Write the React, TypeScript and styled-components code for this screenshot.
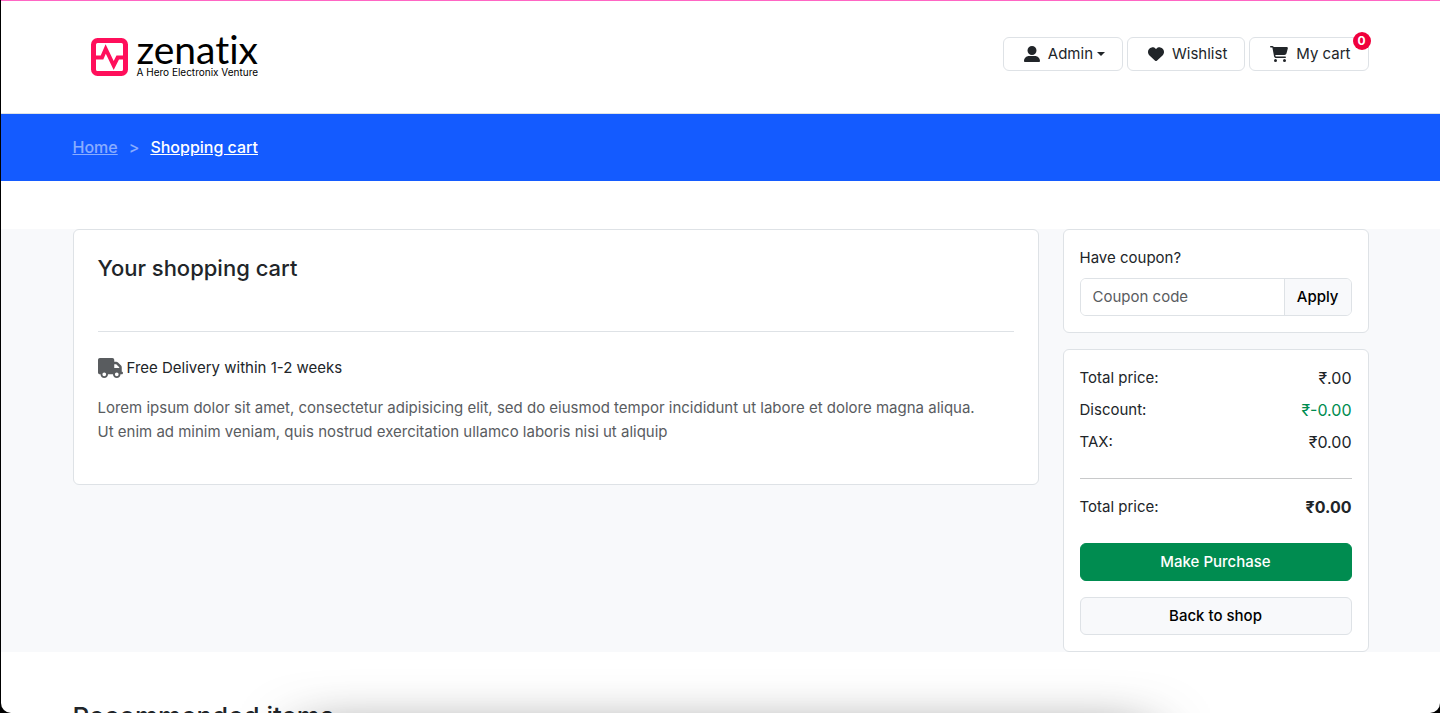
import React from "react";
import styled, { createGlobalStyle, css } from "styled-components";
import { FaCartShopping, FaHeart, FaTruck, FaUserLarge } from "react-icons/fa6";

const GlobalStyle = createGlobalStyle`
  *, *::before, *::after { box-sizing: border-box; }
  body {
    margin: 0;
    background: #000;
    color: #212529;
    font-family: Inter, "Liberation Sans", sans-serif;
    font-size: 15px;
    line-height: 24px;
  }
  h1, h2, p, dl, dd, dt, ol { margin: 0; padding: 0; }
  button, input { font: inherit; }
`;

const Window = styled.div`
  height: 100vh;
  margin-left: 1px;
  overflow: hidden auto;
  scrollbar-width: none;
  background: #fff;
  border-top: 1px solid #ff66c4;
  border-radius: 0 0 10px 10px;
`;

const Container = styled.div`
  width: 100%;
  max-width: 1320px;
  margin: 0 auto;
  padding: 0 12px;
`;

const Header = styled.header`
  padding: 36px 0;
  border-bottom: 1px solid #dee2e6;
`;

const HeaderRow = styled(Container)`
  display: flex;
  align-items: flex-start;
  justify-content: space-between;
`;

const Logo = styled.a`
  display: flex;
  align-items: center;
  gap: 9px;
  height: 40px;
  margin-left: 18px;
  color: #000;
  text-decoration: none;
`;

const LogoText = styled.span`
  display: flex;
  flex-direction: column;
  gap: 6px;
`;

const Wordmark = styled.span`
  font-family: Lato, sans-serif;
  font-size: 39px;
  font-variant-ligatures: none;
  line-height: 24px;
`;

const Tagline = styled.span`
  font-size: 10px;
  line-height: 10px;
  white-space: nowrap;
`;

const Actions = styled.nav`
  display: flex;
  gap: 4px;
`;

const actionStyle = css`
  position: relative;
  display: flex;
  align-items: center;
  gap: 8px;
  height: 34px;
  padding: 0 17px 0 20px;
  border: 1px solid #dee2e6;
  border-radius: 6px;
  background: #fff;
  color: #212529;
  text-decoration: none;
  white-space: nowrap;
  cursor: pointer;
`;

const ActionButton = styled.button`${actionStyle}`;
const ActionLink = styled.a`${actionStyle}`;

const CartIcon = styled(FaCartShopping)`
  width: 18px;
  height: 16px;
`;

const Caret = styled.span`
  margin-left: -4px;
  border: 4px solid transparent;
  border-top-color: currentColor;
  border-bottom: 0;
`;

const Badge = styled.span`
  position: absolute;
  top: -6px;
  right: -3px;
  width: 18px;
  height: 18px;
  border-radius: 50%;
  background: #f0003c;
  color: #fff;
  font-size: 12px;
  font-weight: 700;
  line-height: 18px;
  text-align: center;
`;

const Banner = styled.div`
  padding: 24px 0;
  background: #145bff;
`;

const Crumbs = styled.ol`
  display: flex;
  gap: 11px;
  list-style: none;
  font-size: 16px;
  font-weight: 500;
  line-height: 19px;
  color: rgba(255, 255, 255, 0.5);
`;

const CrumbLink = styled.a<{ $current?: boolean }>`
  color: ${(p) => (p.$current ? "#fff" : "inherit")};
`;

const CartSection = styled.section`
  margin: 48px 0;
  background: #f8f9fb;
`;

const CartGrid = styled(Container)`
  display: grid;
  grid-template-columns: minmax(0, 1fr) 306px;
  align-items: start;
  gap: 24px;
`;

const Card = styled.div`
  border: 1px solid #dee2e6;
  border-radius: 6px;
  background: #fff;
`;

const CartCard = styled(Card)`
  padding: 0 24px;
`;

const CardTitle = styled.h1`
  padding: 24px 0 48px;
  font-size: 22px;
  font-weight: 500;
  line-height: 29px;
`;

const Delivery = styled.div`
  display: flex;
  flex-direction: column;
  gap: 16px;
  padding: 24px 0 40px;
  border-top: 1px solid #dee2e6;
`;

const DeliveryLine = styled.p`
  display: flex;
  align-items: center;
  gap: 4px;

  svg { width: 25px; height: 20px; color: #595c5f; }
`;

const Muted = styled.p`
  color: #595c5f;
`;

const Side = styled.aside`
  display: flex;
  flex-direction: column;
  gap: 16px;
`;

const SideCard = styled(Card)`
  padding: 16px;
`;

const CouponForm = styled.form`
  display: flex;
  flex-direction: column;
  gap: 8px;
`;

const InputGroup = styled.div`
  display: flex;
  height: 38px;
  border: 1px solid #dee2e6;
  border-radius: 6px;
  overflow: hidden;
`;

const CouponInput = styled.input`
  flex: 1;
  min-width: 0;
  padding: 0 12px;
  border: 0;
  background: #fff;
  color: #212529;

  &::placeholder { color: #595c5f; opacity: 1; }
`;

const ApplyButton = styled.button`
  padding: 0 12px;
  border: 0;
  border-left: 1px solid #dee2e6;
  background: #f8f9fb;
  color: #000;
  font-weight: 500;
  cursor: pointer;
`;

const Totals = styled.dl`
  display: flex;
  flex-direction: column;
  gap: 8px;
`;

const TotalRow = styled.div`
  display: flex;
  justify-content: space-between;
`;

const Amount = styled.dd<{ $tone?: "saving" | "total" }>`
  color: ${(p) => (p.$tone === "saving" ? "#008c50" : "inherit")};
  font-size: 16px;
  font-weight: ${(p) => (p.$tone === "total" ? 700 : 400)};
`;

const Rule = styled.hr`
  margin: 24px 0 16px;
  border: 0;
  border-top: 1px solid #c8c9ca;
`;

const Buttons = styled.div`
  display: flex;
  flex-direction: column;
  gap: 16px;
  margin-top: 24px;
`;

const WideButton = styled.button<{ $primary?: boolean }>`
  height: 38px;
  border: 1px solid ${(p) => (p.$primary ? "#008c50" : "#dee2e6")};
  border-radius: 6px;
  background: ${(p) => (p.$primary ? "#008c50" : "#f8f9fb")};
  color: ${(p) => (p.$primary ? "#fff" : "#000")};
  font-weight: 500;
  cursor: pointer;
`;

const SectionTitle = styled.h2`
  font-size: 26px;
  font-weight: 500;
  line-height: 34px;
`;

const DockShadow = styled.div`
  position: fixed;
  right: 290px;
  bottom: -128px;
  left: 300px;
  height: 100px;
  box-shadow: 0 0 60px rgba(0, 0, 0, 0.75);
  pointer-events: none;
`;

function LogoMark() {
  return (
    <svg width="37" height="38" viewBox="0 0 37 38" fill="none" aria-hidden="true">
      <rect x="2.5" y="2.5" width="32" height="33" rx="4" stroke="#ff0f5b" strokeWidth="5" />
      <path d="M4 19.5h7L14.7 11l8 16.5 4-8H33" stroke="#ff0f5b" strokeWidth="4" />
    </svg>
  );
}

export default function App() {
  return (
    <>
      <GlobalStyle />
      <Window>
        <Header>
          <HeaderRow>
            <Logo href="#">
              <LogoMark />
              <LogoText>
                <Wordmark>zenatix</Wordmark>
                <Tagline>A Hero Electronix Venture</Tagline>
              </LogoText>
            </Logo>
            <Actions>
              <ActionButton type="button">
                <FaUserLarge size={16} />
                Admin
                <Caret />
              </ActionButton>
              <ActionLink href="#">
                <FaHeart size={16} />
                Wishlist
              </ActionLink>
              <ActionLink href="#">
                <CartIcon />
                My cart
                <Badge>0</Badge>
              </ActionLink>
            </Actions>
          </HeaderRow>
        </Header>

        <Banner>
          <Container>
            <Crumbs>
              <li><CrumbLink href="#">Home</CrumbLink></li>
              <li aria-hidden="true">&gt;</li>
              <li><CrumbLink href="#" $current>Shopping cart</CrumbLink></li>
            </Crumbs>
          </Container>
        </Banner>

        <CartSection>
          <CartGrid>
            <CartCard>
              <CardTitle>Your shopping cart</CardTitle>
              <Delivery>
                <DeliveryLine>
                  <FaTruck />
                  Free Delivery within 1-2 weeks
                </DeliveryLine>
                <Muted>
                  Lorem ipsum dolor sit amet, consectetur adipisicing elit, sed do eiusmod tempor
                  incididunt ut labore et dolore magna aliqua.
                  <br />
                  Ut enim ad minim veniam, quis nostrud exercitation ullamco laboris nisi ut aliquip
                </Muted>
              </Delivery>
            </CartCard>

            <Side>
              <SideCard>
                <CouponForm>
                  <label htmlFor="coupon">Have coupon?</label>
                  <InputGroup>
                    <CouponInput id="coupon" type="text" placeholder="Coupon code" />
                    <ApplyButton type="button">Apply</ApplyButton>
                  </InputGroup>
                </CouponForm>
              </SideCard>

              <SideCard>
                <Totals>
                  <TotalRow><dt>Total price:</dt><Amount>₹.00</Amount></TotalRow>
                  <TotalRow><dt>Discount:</dt><Amount $tone="saving">₹-0.00</Amount></TotalRow>
                  <TotalRow><dt>TAX:</dt><Amount>₹0.00</Amount></TotalRow>
                </Totals>
                <Rule />
                <Totals>
                  <TotalRow><dt>Total price:</dt><Amount $tone="total">₹0.00</Amount></TotalRow>
                </Totals>
                <Buttons>
                  <WideButton type="button" $primary>Make Purchase</WideButton>
                  <WideButton type="button">Back to shop</WideButton>
                </Buttons>
              </SideCard>
            </Side>
          </CartGrid>
        </CartSection>

        <Container>
          <SectionTitle>Recommended items</SectionTitle>
        </Container>
      </Window>
      <DockShadow />
    </>
  );
}
